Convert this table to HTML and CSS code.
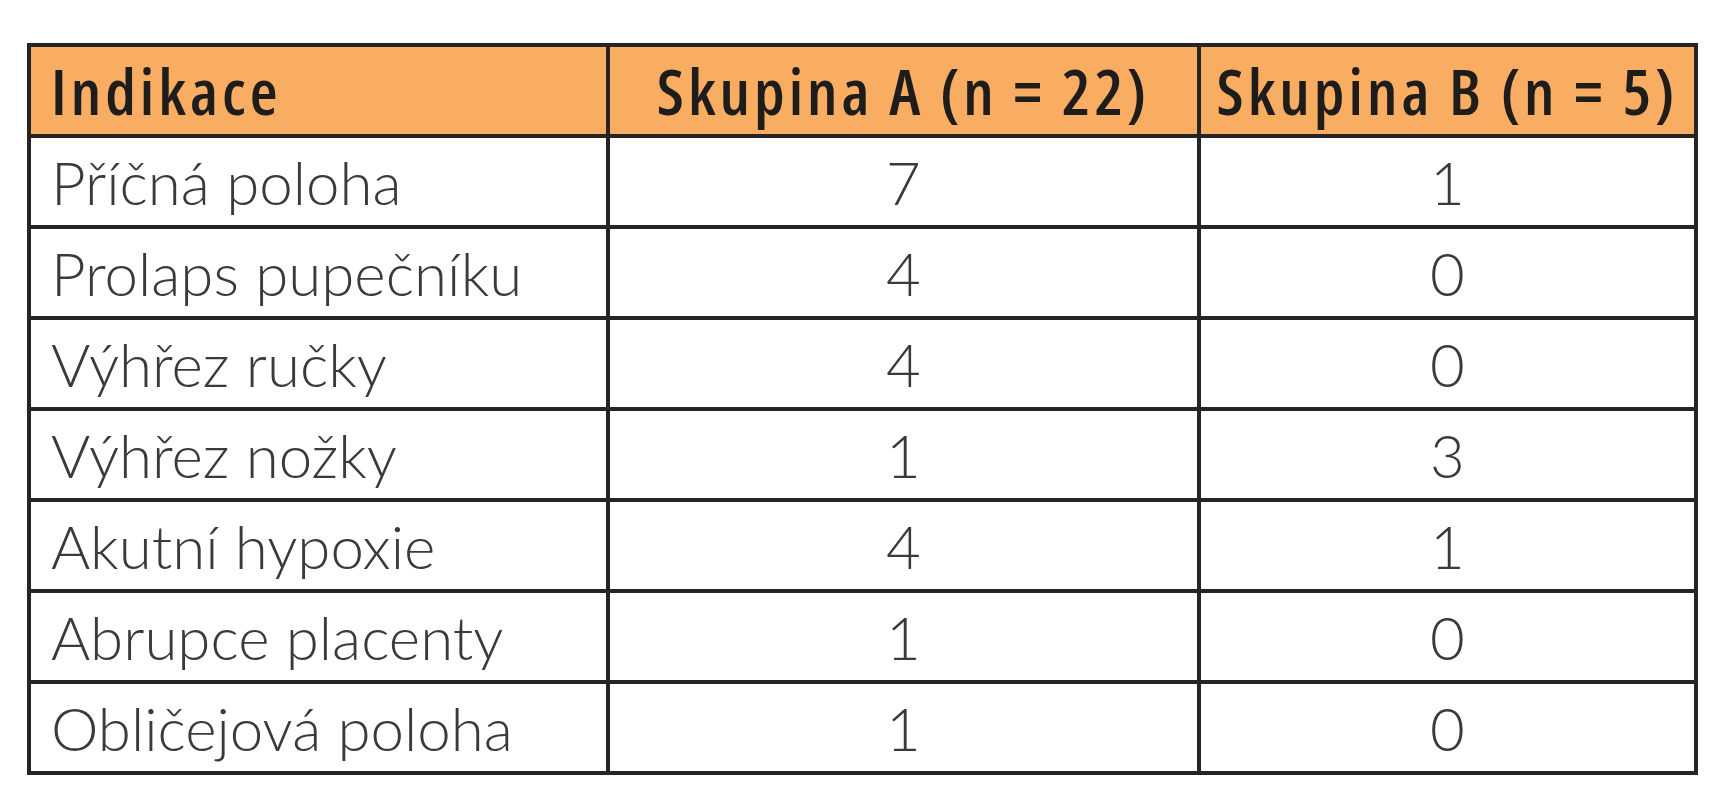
FILE: index.html
```html
<!DOCTYPE html>
<html lang="cs">
<head>
<meta charset="utf-8">
<title>Indikace</title>
<link rel="stylesheet" href="styles.css">
</head>
<body>
<div class="table" role="table">
  <div class="cell head first">Indikace</div>
  <div class="cell head num">Skupina A (n = 22)</div>
  <div class="cell head num">Skupina B (n = 5)</div>

  <div class="cell first body">Příčná poloha</div>
  <div class="cell num body">7</div>
  <div class="cell num body">1</div>

  <div class="cell first body">Prolaps pupečníku</div>
  <div class="cell num body">4</div>
  <div class="cell num body">0</div>

  <div class="cell first body">Výhřez ručky</div>
  <div class="cell num body">4</div>
  <div class="cell num body">0</div>

  <div class="cell first body">Výhřez nožky</div>
  <div class="cell num body">1</div>
  <div class="cell num body">3</div>

  <div class="cell first body">Akutní hypoxie</div>
  <div class="cell num body">4</div>
  <div class="cell num body">1</div>

  <div class="cell first body">Abrupce placenty</div>
  <div class="cell num body">1</div>
  <div class="cell num body">0</div>

  <div class="cell first body">Obličejová poloha</div>
  <div class="cell num body">1</div>
  <div class="cell num body">0</div>
</div>
</body>
</html>
```

FILE: styles.css
```css
html, body {
  margin: 0;
  padding: 0;
  background: #ffffff;
}

body {
  padding: 43px 0 0 27px;
}

.table {
  display: grid;
  grid-template-columns: 575px 587px 493px;
  grid-auto-rows: 91px;
  grid-template-rows: 87px;
  width: 1671px;
  box-sizing: border-box;
  border: 4px solid #272425;
  column-gap: 4px;
  background: #272425;
}

.cell {
  display: flex;
  align-items: center;
  box-sizing: border-box;
  background: #ffffff;
}

.body {
  margin-top: 4px;
  font-family: "Lato", "Open Sans", sans-serif;
  font-weight: 300;
  font-size: 60px;
  color: #3a3a3a;
}

.head {
  background: #f8ad62;
  font-family: "Open Sans", sans-serif;
  font-stretch: 75%;
  font-weight: 600;
  font-size: 64px;
  letter-spacing: 4px;
  color: #1f1c1c;
}

.first {
  padding-left: 20px;
}

.num {
  justify-content: center;
}
```
